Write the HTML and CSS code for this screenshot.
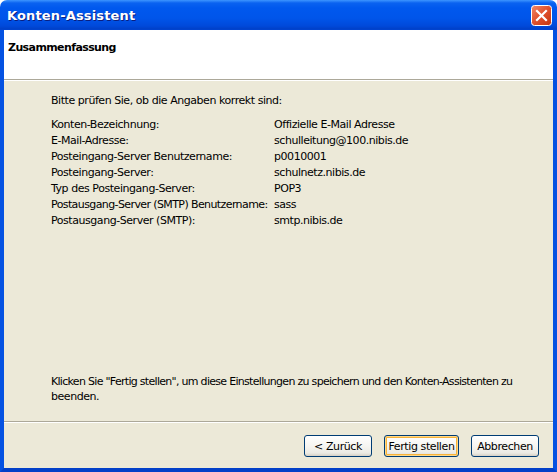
FILE: index.html
```html
<!DOCTYPE html>
<html>
<head>
<meta charset="utf-8">
<link rel="stylesheet" href="styles.css">
</head>
<body>
<div class="window">
  <div class="titlebar">
    <span class="title">Konten-Assistent</span>
    <span class="close">
      <svg width="21" height="21" viewBox="0 0 21 21">
        <defs>
          <linearGradient id="cg" x1="0" y1="0" x2="1" y2="1">
            <stop offset="0" stop-color="#F08A6A"/>
            <stop offset="0.5" stop-color="#E0502C"/>
            <stop offset="1" stop-color="#C2350E"/>
          </linearGradient>
        </defs>
        <rect x="0.5" y="0.5" width="20" height="20" rx="3" fill="url(#cg)" stroke="#FFFFFF" stroke-width="1"/>
        <path d="M6 6 L15 15 M15 6 L6 15" stroke="#FFFFFF" stroke-width="2.2" stroke-linecap="square"/>
      </svg>
    </span>
  </div>
  <div class="client">
    <div class="header">
      <span class="header-title">Zusammenfassung</span>
    </div>
    <div class="content">
      <p class="intro">Bitte prüfen Sie, ob die Angaben korrekt sind:</p>
      <div class="summary">
        <span>Konten-Bezeichnung:</span><span>Offizielle E-Mail Adresse</span>
        <span>E-Mail-Adresse:</span><span>schulleitung@100.nibis.de</span>
        <span>Posteingang-Server Benutzername:</span><span>p0010001</span>
        <span>Posteingang-Server:</span><span>schulnetz.nibis.de</span>
        <span>Typ des Posteingang-Server:</span><span>POP3</span>
        <span class="tight">Postausgang-Server (SMTP) Benutzername:</span><span>sass</span>
        <span>Postausgang-Server (SMTP):</span><span>smtp.nibis.de</span>
      </div>
      <p class="finish"><span class="nowrap">Klicken Sie "Fertig stellen", um diese Einstellungen zu speichern und den Konten-Assistenten zu</span><br>beenden.</p>
    </div>
    <div class="footer">
      <button class="btn btn-back">&lt; Zurück</button>
      <button class="btn btn-default">Fertig stellen</button>
      <button class="btn btn-cancel">Abbrechen</button>
    </div>
  </div>
</div>
</body>
</html>
```
FILE: styles.css
```css
html, body {
  margin: 0;
  padding: 0;
  width: 557px;
  height: 472px;
  overflow: hidden;
  background: #ffffff;
}
.window {
  width: 557px;
  height: 472px;
  display: flex;
  flex-direction: column;
  font-family: "DejaVu Sans", "Liberation Sans", sans-serif;
  font-size: 11px;
  letter-spacing: -0.45px;
  color: #000000;
}
.titlebar {
  height: 30px;
  flex: none;
  border-radius: 7px 7px 0 0;
  background: linear-gradient(#3D95FF 0px, #0A62F0 3px, #0058EE 8px, #0055EA 18px, #0049DA 26px, #0040C8 29px, #0045D4 30px);
  display: flex;
  align-items: center;
  justify-content: space-between;
  padding: 0 5px 0 7px;
  box-sizing: border-box;
}
.title {
  color: #ffffff;
  font-family: "DejaVu Sans", sans-serif;
  font-weight: bold;
  font-size: 13px;
  text-shadow: 1px 1px 0 #0A1E80;
  letter-spacing: 0.15px;
  padding-top: 1px;
}
.close {
  width: 21px;
  height: 21px;
  display: block;
  margin-top: 1px;
}
.close svg {
  display: block;
}
.client {
  flex: 1;
  display: flex;
  flex-direction: column;
  border-left: 4px solid #0552E2;
  border-right: 4px solid #0552E2;
  border-bottom: 4px solid #0340C8;
  background: #ECE9D8;
}
.header {
  height: 50px;
  flex: none;
  background: #ffffff;
  border-bottom: 1px solid #ACA899;
  box-shadow: 0 1px 0 #ffffff;
  padding: 11px 0 0 4px;
  box-sizing: border-box;
}
.header-title {
  font-weight: bold;
  font-size: 11px;
  letter-spacing: -0.6px;
}
.content {
  flex: 1;
  display: flex;
  flex-direction: column;
  padding: 12px 20px 0 47px;
  margin-top: 1px;
}
.intro {
  margin: 0 0 8px 0;
  line-height: 16px;
}
.summary {
  display: grid;
  grid-template-columns: 223px auto;
  grid-auto-rows: 16px;
  line-height: 16px;
  white-space: nowrap;
}
.tight {
  letter-spacing: -0.6px;
}
.finish {
  margin: auto 0 17px 0;
  line-height: 15px;
}
.nowrap {
  white-space: nowrap;
  letter-spacing: -0.7px;
}
.footer {
  height: 47px;
  flex: none;
  border-top: 1px solid #ACA899;
  box-shadow: inset 0 1px 0 #ffffff;
  display: flex;
  justify-content: flex-end;
  align-items: flex-start;
  padding: 13px 14px 0 0;
  box-sizing: border-box;
  gap: 12px;
}
.btn {
  height: 22px;
  font-family: "DejaVu Sans", "Liberation Sans", sans-serif;
  font-size: 11px;
  letter-spacing: -0.4px;
  color: #000000;
  border: 1px solid #003C74;
  border-radius: 3px;
  background: linear-gradient(#FFFFFF 0%, #F6F5F1 50%, #ECEBE4 85%, #D6D0C5 100%);
  padding: 0;
  margin: 0;
}
.btn-back { width: 68px; }
.btn-default {
  width: 75px;
  box-shadow: inset 0 0 0 1px #FDD889, inset 0 0 0 2px #F8B33A;
}
.btn-cancel { width: 68px; }
```
